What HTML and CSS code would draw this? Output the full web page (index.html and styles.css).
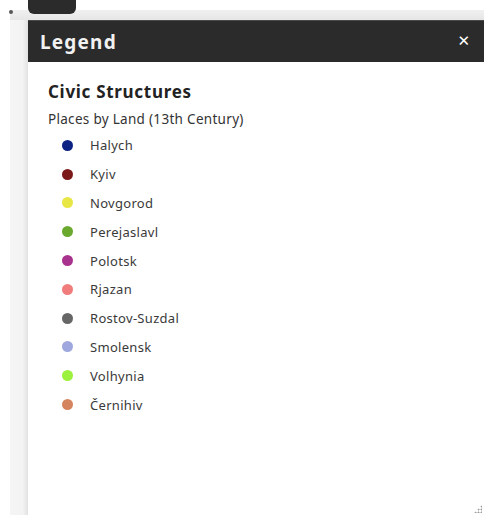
FILE: index.html
```html
<!DOCTYPE html>
<html lang="en">
<head>
<meta charset="utf-8">
<title>Legend</title>
<link rel="stylesheet" href="styles.css">
</head>
<body>
<div class="topbar">
  <span class="pin"></span>
  <span class="tab"></span>
</div>
<div class="main">
  <div class="gutter"></div>
  <section class="panel">
    <header class="panel-head">
      <h1>Legend</h1>
      <button class="close" aria-label="Close">&#x2715;</button>
    </header>
    <div class="panel-body">
      <h2>Civic Structures</h2>
      <p class="layer">Places by Land (13th Century)</p>
      <ul class="items">
        <li><span class="dot" style="background:#0c2384"></span>Halych</li>
        <li><span class="dot" style="background:#7c1a1a"></span>Kyiv</li>
        <li><span class="dot" style="background:#e8e644"></span>Novgorod</li>
        <li><span class="dot" style="background:#6aa82e"></span>Perejaslavl</li>
        <li><span class="dot" style="background:#a8338f"></span>Polotsk</li>
        <li><span class="dot" style="background:#f07c7c"></span>Rjazan</li>
        <li><span class="dot" style="background:#666666"></span>Rostov-Suzdal</li>
        <li><span class="dot" style="background:#9ea8df"></span>Smolensk</li>
        <li><span class="dot" style="background:#9cf03e"></span>Volhynia</li>
        <li><span class="dot" style="background:#d4845e"></span>Černihiv</li>
      </ul>
    </div>
    <span class="grip"></span>
  </section>
</div>
</body>
</html>
```
FILE: styles.css
```css
html, body {
  margin: 0;
  height: 100%;
  background: #ffffff;
  font-family: "Noto Sans", "Open Sans", sans-serif;
  color: #333333;
}

.topbar {
  position: relative;
  height: 20px;
  box-sizing: border-box;
  padding-top: 10px;
}
.topbar::before {
  content: "";
  display: block;
  height: 10px;
  margin-left: 10px;
  background: linear-gradient(#f0f0f0, #e6e6e6);
}
.pin {
  position: absolute;
  left: 9px;
  top: 10px;
  width: 4px;
  height: 4px;
  border-radius: 50%;
  background: #555555;
}
.tab {
  position: absolute;
  left: 28px;
  top: 0;
  width: 48px;
  height: 14px;
  border-radius: 0 0 6px 6px;
  background: #2b2b2b;
}

.main {
  display: flex;
  height: 495px;
}
.gutter {
  width: 18px;
  margin-left: 10px;
  background: linear-gradient(90deg, #f5f5f5 0, #f3f3f3 70%, #e2e2e2 100%);
}

.panel {
  position: relative;
  flex: 1;
  display: flex;
  flex-direction: column;
  background: #ffffff;
}
.panel-head {
  display: flex;
  align-items: center;
  justify-content: space-between;
  height: 42px;
  padding: 0 14px 0 12px;
  background: #2b2b2b;
  border-top: 1px solid #4a4a4a;
  box-sizing: border-box;
}
.panel-head h1 {
  margin: 0;
  font-size: 19px;
  font-weight: 700;
  color: #f2f2f2;
  letter-spacing: 1.2px;
}
.close {
  border: 0;
  background: none;
  padding: 0;
  color: #ffffff;
  font-family: "DejaVu Sans", sans-serif;
  font-size: 15px;
  font-weight: 700;
  line-height: 1;
}

.panel-body {
  padding: 19px 0 0 20px;
}
.panel-body h2 {
  margin: 0;
  font-size: 17px;
  font-weight: 700;
  color: #222222;
  line-height: 22px;
  letter-spacing: 0.7px;
}
.layer {
  margin: 7px 0 0;
  font-size: 13.5px;
  line-height: 18px;
  color: #333333;
  letter-spacing: 0.3px;
}
.items {
  list-style: none;
  margin: 3px 0 0;
  padding: 0 0 0 14px;
}
.items li {
  display: flex;
  align-items: center;
  height: 28.8px;
  font-size: 13px;
  color: #3a3a3a;
  letter-spacing: 0.3px;
}
.dot {
  width: 11px;
  height: 11px;
  border-radius: 50%;
  margin-right: 17px;
}

.grip {
  position: absolute;
  right: 2px;
  bottom: 2px;
  width: 8px;
  height: 8px;
  background: radial-gradient(circle, #9a9a9a 0.8px, transparent 1.2px) 0 0 / 3px 3px;
  clip-path: polygon(100% 0, 100% 100%, 0 100%);
}
```
